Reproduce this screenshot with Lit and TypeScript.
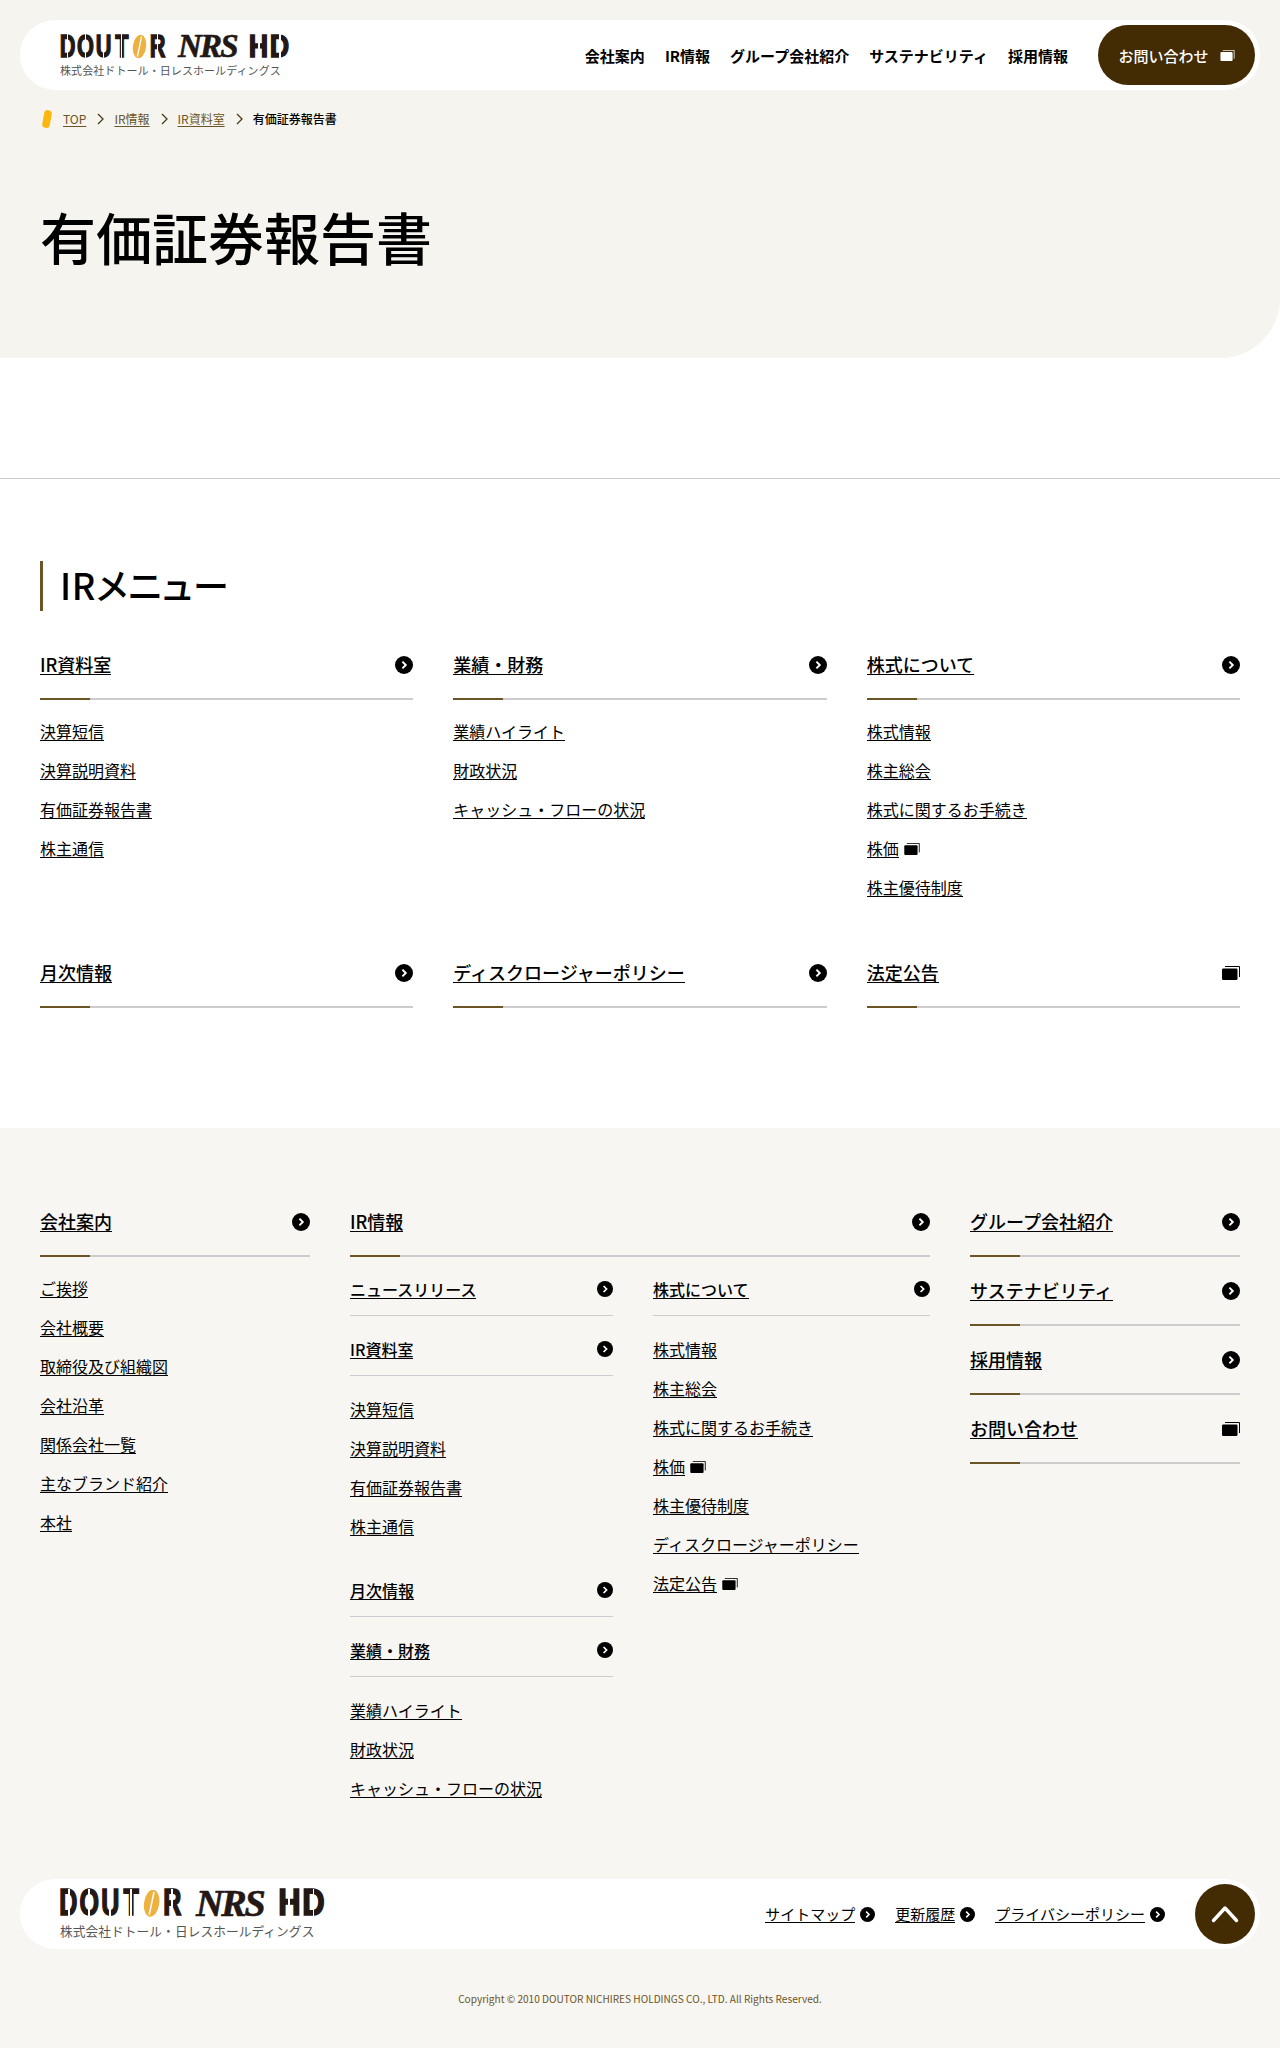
import { LitElement, html, css, nothing } from "lit";
import { customElement } from "lit/decorators.js";

const arrow = (size = 18) => html`<svg class="ic" width=${size} height=${size} viewBox="0 0 18 18"><circle cx="9" cy="9" r="9" fill="#000"/><path d="M7.4 5.6 10.8 9l-3.4 3.4" fill="none" stroke="#fff" stroke-width="1.9"/></svg>`;
const win = (w = 18, h = 14, c = "#000") => html`<svg class="ic" width=${w} height=${h} viewBox="0 0 18 14"><path d="M3 .5h14.5V11" fill="none" stroke=${c} stroke-width="1"/><rect x="0" y="2.5" width="15.5" height="11.5" rx="1.2" fill=${c}/></svg>`;

type Item = string | { t: string; ext: boolean };
const ext = (t: string) => ({ t, ext: true });

const logo = (cls = "") => html`<div class="logo ${cls}">
  <div class="mark">
    ${"DOUT".split("").map((c) => html`<span class="dt"><b>${c}</b></span>`)}
    <svg class="bean" width="15" height="23" viewBox="0 0 15 23"><ellipse cx="7.5" cy="11.5" rx="6.6" ry="11.8" transform="rotate(8 7.5 11.5)" fill="#eeb13f"/><path d="M9.6 1.5 5.4 21.5" stroke="#fff" stroke-width="1.3"/></svg>
    <span class="dt"><b>R</b></span>
    <span class="nrs">NRS</span>
    <span class="hd"><b>H</b></span><span class="hd"><b>D</b></span>
  </div>
  <div class="sub">株式会社ドトール・日レスホールディングス</div>
</div>`;

@customElement("app-root")
export class AppRoot extends LitElement {
  static styles = css`
    :host { display: block; font-family: "Noto Sans CJK JP", "Noto Sans", sans-serif; color: #000; background: #fff; }
    * { box-sizing: border-box; }
    a { color: inherit; text-decoration: none; }
    .ic { display: block; flex: none; }
    .u { display: inline-block; border-bottom: 1px solid #000; }

    .hero { background: #f5f4ef; height: 358px; padding: 20px 0 0; border-bottom-right-radius: 60px; }
    .bar { margin: 0 20px; height: 70px; background: #fff; border-radius: 35px; display: flex; align-items: center; padding: 0 5px 0 40px; }
    .grow { flex: 1; }
    .nav { display: flex; gap: 20px; font-size: 15px; font-weight: 700; margin-right: 30px; }
    .contact { width: 157px; height: 60px; border-radius: 30px; background: #432c04; color: #fff; display: flex; align-items: center; justify-content: center; gap: 11px; font-size: 15px; font-weight: 500; }

    .logo { display: block; }
    .logo.big { zoom: 1.153; }
    .mark { display: flex; height: 23px; align-items: stretch; color: #231815; }
    .dt, .hd { position: relative; width: 15px; margin-right: 3px; display: flex; justify-content: center; font: 700 32px/23px "Liberation Sans", sans-serif; overflow: visible; }
    .dt b, .hd b { display: block; transform: scaleX(.68); -webkit-text-stroke: 1.5px #231815; }
    .dt::after, .hd::after { content: ""; position: absolute; left: 50%; top: -1px; bottom: -1px; width: 1.7px; margin-left: -.85px; background: #fff; }
    .bean { margin-right: 3px; flex: none; }
    .nrs { margin-left: 10px; margin-right: 11px; width: 60px; font: italic 700 33px/23px "Liberation Serif", serif; letter-spacing: -1.8px; white-space: nowrap; -webkit-text-stroke: .6px #231815; }
    .hd { width: 20px; margin-right: 1px; }
    .hd b { transform: scaleX(.84); }
    .sub { margin-top: 6px; font-size: 11px; line-height: 12px; letter-spacing: .08px; color: #555; white-space: nowrap; }

    .crumbs { margin: 21px 0 0 42px; height: 16px; display: flex; align-items: center; font-size: 12px; line-height: 16px; color: #6b5526; font-feature-settings: "palt"; }
    .crumbs .b { width: 10px; height: 18px; margin-right: 11px; }
    .crumbs a { text-decoration: underline; text-underline-offset: 2px; }
    .crumbs svg.s { margin: 0 10px 0 11px; }
    .crumbs .cur { color: #000; font-weight: 500; }
    h1 { margin: 75px 0 0 40px; font-size: 56px; line-height: 68px; font-weight: 500; }

    .rule { margin: 120px 0 0; border: 0; border-top: 1px solid #ccc; height: 0; }
    .menu { padding: 82px 40px 120px; }
    h2 { margin: 0 0 43px; height: 50px; border-left: 3px solid #6b5526; padding-left: 17px; font-size: 36px; line-height: 47px; font-weight: 500; font-feature-settings: "palt"; letter-spacing: .7px; }

    .grid3 { display: grid; grid-template-columns: repeat(3, 1fr); gap: 65px 40px; }
    .ttl { display: flex; align-items: center; justify-content: space-between; height: 46px; padding-bottom: 23px; border-bottom: 2px solid #ccc; position: relative; font-size: 18px; font-weight: 500; line-height: 20px; margin: 0; }
    .ttl::after { content: ""; position: absolute; left: 0; bottom: -2px; width: 50px; height: 2px; background: #6b5526; }
    .list { list-style: none; margin: 22px 0 0; padding: 0; display: flex; flex-direction: column; gap: 20px; font-size: 16px; line-height: 18px; }
    .list li { display: flex; align-items: center; gap: 5px; }

    footer { background: #f7f6f2; padding: 83px 0 0; height: 920px; }
    .fgrid { margin: 0 40px; height: 668px; display: grid; grid-template-columns: 270px 580px 270px; gap: 40px; }
    .stack { display: flex; flex-direction: column; gap: 23px; }
    .two { display: grid; grid-template-columns: 263px 277px; gap: 40px; margin-top: 23px; }
    .sttl { display: flex; align-items: center; justify-content: space-between; height: 36px; padding-bottom: 17px; border-bottom: 1px solid #ccc; font-size: 16px; font-weight: 500; line-height: 18px; margin: 0 0 24px; }
    .two .list { margin: 0 0 45px; }
    .two .list:last-child { margin-bottom: 0; }

    .flinks { display: flex; gap: 20px; margin-right: 30px; font-size: 15px; line-height: 16px; }
    .flinks a { display: flex; align-items: center; gap: 5px; }
    .top { width: 60px; height: 60px; border-radius: 50%; background: #432c04; display: flex; align-items: center; justify-content: center; flex: none; }
    .copy { margin-top: 42px; text-align: center; font-size: 10.1px; line-height: 16px; color: #6b5526; font-feature-settings: "palt"; }
  `;

  private ttl(t: string, e = false) {
    return html`<h3 class="ttl"><a class="u">${t}</a>${e ? win() : arrow()}</h3>`;
  }
  private sttl(t: string) {
    return html`<h4 class="sttl"><a class="u">${t}</a>${arrow(16)}</h4>`;
  }
  private list(items: Item[]) {
    return html`<ul class="list">${items.map((i) =>
      typeof i === "string"
        ? html`<li><a class="u">${i}</a></li>`
        : html`<li><a class="u">${i.t}</a>${win(16, 12)}</li>`
    )}</ul>`;
  }

  render() {
    const sep = html`<svg class="s" width="7" height="12" viewBox="0 0 7 12"><path d="M1 1l5 5-5 5" fill="none" stroke="#4a3a1a" stroke-width="1.3"/></svg>`;
    return html`
      <section class="hero">
        <header class="bar">
          ${logo()}
          <div class="grow"></div>
          <nav class="nav">
            ${["会社案内", "IR情報", "グループ会社紹介", "サステナビリティ", "採用情報"].map((n) => html`<a>${n}</a>`)}
          </nav>
          <a class="contact">お問い合わせ ${win(15, 11, "#fff")}</a>
        </header>
        <div class="crumbs">
          <svg class="b" viewBox="0 0 10 18"><rect x="1.2" y="0" width="7.6" height="18" rx="3.8" transform="rotate(10 5 9)" fill="#fbb60f"/></svg>
          <a>TOP</a>${sep}<a>IR情報</a>${sep}<a>IR資料室</a>${sep}<span class="cur">有価証券報告書</span>
        </div>
        <h1>有価証券報告書</h1>
      </section>
      <hr class="rule" />
      <section class="menu">
        <h2>IRメニュー</h2>
        <div class="grid3">
          <div>${this.ttl("IR資料室")}${this.list(["決算短信", "決算説明資料", "有価証券報告書", "株主通信"])}</div>
          <div>${this.ttl("業績・財務")}${this.list(["業績ハイライト", "財政状況", "キャッシュ・フローの状況"])}</div>
          <div>${this.ttl("株式について")}${this.list(["株式情報", "株主総会", "株式に関するお手続き", ext("株価"), "株主優待制度"])}</div>
          <div>${this.ttl("月次情報")}</div>
          <div>${this.ttl("ディスクロージャーポリシー")}</div>
          <div>${this.ttl("法定公告", true)}</div>
        </div>
      </section>
      <footer>
        <div class="fgrid">
          <div>${this.ttl("会社案内")}${this.list(["ご挨拶", "会社概要", "取締役及び組織図", "会社沿革", "関係会社一覧", "主なブランド紹介", "本社"])}</div>
          <div>
            ${this.ttl("IR情報")}
            <div class="two">
              <div>
                ${this.sttl("ニュースリリース")}
                ${this.sttl("IR資料室")}
                ${this.list(["決算短信", "決算説明資料", "有価証券報告書", "株主通信"])}
                ${this.sttl("月次情報")}
                ${this.sttl("業績・財務")}
                ${this.list(["業績ハイライト", "財政状況", "キャッシュ・フローの状況"])}
              </div>
              <div>
                ${this.sttl("株式について")}
                ${this.list(["株式情報", "株主総会", "株式に関するお手続き", ext("株価"), "株主優待制度", "ディスクロージャーポリシー", ext("法定公告")])}
              </div>
            </div>
          </div>
          <div class="stack">
            ${this.ttl("グループ会社紹介")}
            ${this.ttl("サステナビリティ")}
            ${this.ttl("採用情報")}
            ${this.ttl("お問い合わせ", true)}
          </div>
        </div>
        <div class="bar fb">
          ${logo("big")}
          <div class="grow"></div>
          <div class="flinks">
            <a><span class="u">サイトマップ</span>${arrow(15)}</a>
            <a><span class="u">更新履歴</span>${arrow(15)}</a>
            <a><span class="u">プライバシーポリシー</span>${arrow(15)}</a>
          </div>
          <a class="top"><svg width="28" height="18" viewBox="0 0 28 18"><path d="M2.5 15.5 14 3l11.5 12.5" fill="none" stroke="#fff" stroke-width="3.4" stroke-linecap="round" stroke-linejoin="round"/></svg></a>
        </div>
        <div class="copy">Copyright © 2010 DOUTOR NICHIRES HOLDINGS CO., LTD. All Rights Reserved.</div>
      </footer>
      ${nothing}
    `;
  }
}
